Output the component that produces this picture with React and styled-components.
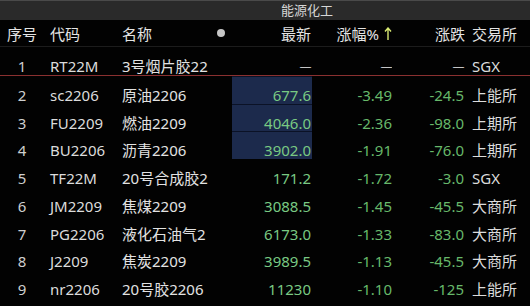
import React from 'react';
import styled, { createGlobalStyle } from 'styled-components';

const GlobalStyle = createGlobalStyle`
  html, body {
    margin: 0;
    padding: 0;
    background: #000;
  }
  body {
    font-family: "Noto Sans", "Noto Sans CJK SC", sans-serif;
  }
`;

const columns = '44px 78px 88px 22px 80px 80px 73px 1fr';

const Board = styled.div`
  width: 530px;
  height: 306px;
  background: #020202;
  overflow: hidden;
`;

const TitleBar = styled.div`
  height: 19px;
  border-top: 1px solid #4a4a4a;
  background: #2a2a2a;
  color: #d6d6d6;
  font-size: 13px;
  line-height: 19px;
  padding-left: 281px;
`;

const HeaderRow = styled.div`
  display: grid;
  grid-template-columns: ${columns};
  height: 26px;
  align-items: center;
  border-bottom: 1px solid #1c1c1c;
  color: #e4e4e4;
  font-size: 15px;
`;

const Row = styled.div`
  display: grid;
  grid-template-columns: ${columns};
  height: 27.75px;
  font-size: 15px;
  line-height: 20px;
  border-bottom: ${({ $marked }) => ($marked ? '1px solid #8a3030' : 'none')};
`;

const Cell = styled.div`
  padding-top: ${({ $head }) => ($head ? '0' : '9px')};
  white-space: nowrap;
  overflow: hidden;
  text-align: ${({ $align }) => $align || 'left'};
  padding-left: ${({ $pl }) => $pl || 0}px;
  padding-right: ${({ $pr }) => $pr || 0}px;
  color: ${({ $color }) => $color || 'inherit'};
`;

const PriceCell = styled(Cell)`
  background: ${({ $hot }) => ($hot ? '#1c2a4c' : 'transparent')};
  border-top: 1px solid ${({ $hot }) => ($hot ? '#0b1226' : 'transparent')};
  padding-top: ${({ $head }) => ($head ? '0' : '8px')};
`;

const Dash = styled.span`
  font-family: "Liberation Sans", sans-serif;
  font-size: 11px;
  color: #e8e8e8;
  position: relative;
  top: -2px;
`;

const Dot = styled.span`
  display: block;
  width: 8px;
  height: 8px;
  border-radius: 50%;
  background: #c6c6c6;
  margin: 0 auto;
`;

const SortArrow = styled.svg`
  width: 8px;
  height: 14px;
  margin-left: 5px;
  vertical-align: -1px;
`;

const white = '#dcdcdc';
const green = '#67b86a';
const bright = '#79c983';

const rows = [
  ['1', 'RT22M', '3号烟片胶22', null, null, null, 'SGX', false],
  ['2', 'sc2206', '原油2206', '677.6', '-3.49', '-24.5', '上能所', true],
  ['3', 'FU2209', '燃油2209', '4046.0', '-2.36', '-98.0', '上期所', true],
  ['4', 'BU2206', '沥青2206', '3902.0', '-1.91', '-76.0', '上期所', true],
  ['5', 'TF22M', '20号合成胶2', '171.2', '-1.72', '-3.0', 'SGX', false],
  ['6', 'JM2209', '焦煤2209', '3088.5', '-1.45', '-45.5', '大商所', false],
  ['7', 'PG2206', '液化石油气2', '6173.0', '-1.33', '-83.0', '大商所', false],
  ['8', 'J2209', '焦炭2209', '3989.5', '-1.13', '-45.5', '大商所', false],
  ['9', 'nr2206', '20号胶2206', '11230', '-1.10', '-125', '上能所', false],
];

const show = (v) => (v === null ? <Dash>—</Dash> : v);

const App = () => {
  return (
    <Board>
      <GlobalStyle />
      <TitleBar>能源化工</TitleBar>
      <HeaderRow>
        <Cell $head $align="center">序号</Cell>
        <Cell $head $pl={6}>代码</Cell>
        <Cell $head>名称</Cell>
        <Cell $head>
          <Dot />
        </Cell>
        <PriceCell $head $align="right" $pr={1}>最新</PriceCell>
        <Cell $head $align="right">
          涨幅%
          <SortArrow viewBox="0 0 8 14">
            <path d="M4 1 L4 13 M1 4.5 L4 1 L7 4.5" stroke="#d9ea72" strokeWidth="1.4" fill="none" />
          </SortArrow>
        </Cell>
        <Cell $head $align="right">涨跌</Cell>
        <Cell $head $pl={7}>交易所</Cell>
      </HeaderRow>
      {rows.map(([no, code, name, last, pct, chg, ex, hot]) => (
        <Row key={no} $marked={no === '1'}>
          <Cell $align="center" $color="#cfcfcf">{no}</Cell>
          <Cell $pl={6} $color={white}>{code}</Cell>
          <Cell $color="#e2e2e2">{name}</Cell>
          <Cell />
          <PriceCell $hot={hot} $align="right" $pr={1} $color={bright}>
            {show(last)}
          </PriceCell>
          <Cell $align="right" $color={green}>{show(pct)}</Cell>
          <Cell $align="right" $pr={1} $color={green}>{show(chg)}</Cell>
          <Cell $pl={7} $color={white}>{ex}</Cell>
        </Row>
      ))}
    </Board>
  );
};

export default App;
